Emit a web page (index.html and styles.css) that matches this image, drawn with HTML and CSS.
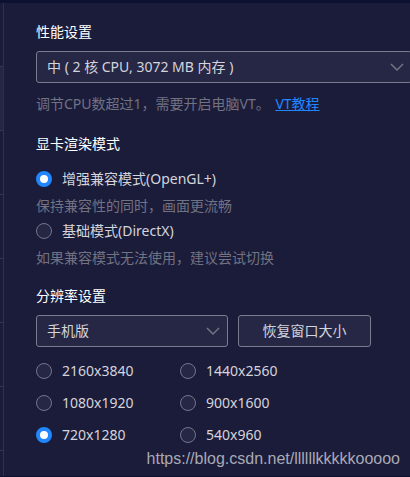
FILE: index.html
```
<!DOCTYPE html>
<html lang="zh-CN">
<head>
<meta charset="utf-8">
<meta name="viewport" content="width=device-width, initial-scale=1">
<title>性能设置</title>
<link rel="stylesheet" href="styles.css">
</head>
<body>
<div class="window">
  <div class="rail"><span></span><span class="active"></span><span></span><span></span><span></span><span></span><span></span><span></span></div>
  <main class="panel">
    <section class="section">
      <h2>性能设置</h2>
      <div class="select wide">
        <select aria-label="性能设置"><option>中 ( 2 核 CPU, 3072 MB 内存 )</option></select>
        <svg viewBox="0 0 14 8" width="14" height="8" aria-hidden="true"><path d="M1 1L7 7L13 1"/></svg>
      </div>
      <p class="note">调节CPU数超过1，需要开启电脑VT。 <a href="#">VT教程</a></p>
    </section>
    <section class="section">
      <h2>显卡渲染模式</h2>
      <div class="modes">
        <label class="radio"><input type="radio" name="mode" checked>增强兼容模式(OpenGL+)</label>
        <p class="hint">保持兼容性的同时，画面更流畅</p>
        <label class="radio"><input type="radio" name="mode">基础模式(DirectX)</label>
        <p class="hint">如果兼容模式无法使用，建议尝试切换</p>
      </div>
    </section>
    <section class="section">
      <h2>分辨率设置</h2>
      <div class="controls">
        <div class="select">
          <select aria-label="分辨率设置"><option>手机版</option></select>
          <svg viewBox="0 0 14 8" width="14" height="8" aria-hidden="true"><path d="M1 1L7 7L13 1"/></svg>
        </div>
        <button type="button">恢复窗口大小</button>
      </div>
      <div class="sizes">
        <label class="radio"><input type="radio" name="size">2160x3840</label>
        <label class="radio"><input type="radio" name="size">1440x2560</label>
        <label class="radio"><input type="radio" name="size">1080x1920</label>
        <label class="radio"><input type="radio" name="size">900x1600</label>
        <label class="radio"><input type="radio" name="size" checked>720x1280</label>
        <label class="radio"><input type="radio" name="size">540x960</label>
      </div>
    </section>
    <footer class="source">https://blog.csdn.net/llllllkkkkkooooo</footer>
  </main>
</div>
</body>
</html>
```
FILE: styles.css
```
* {
  box-sizing: border-box;
}

body {
  margin: 0;
  background: #1b1c3a;
  color: #d4d4dc;
  font: 14px/22px "Noto Sans", "Noto Sans CJK SC", sans-serif;
}

h2,
p {
  margin: 0;
  font-size: 14px;
  font-weight: 400;
}

h2 {
  color: #fff;
}

.window {
  display: flex;
  min-height: 100vh;
  overflow: hidden;
  border-top: 3px solid #0e1030;
  border-bottom: 1px solid #0e1030;
}

.rail {
  display: flex;
  flex-direction: column;
  width: 4px;
  border-right: 1px solid #2f3050;
}

.rail span {
  height: 64px;
  border-bottom: 1px solid #34354f;
}

.rail span:last-child {
  flex: 1;
  height: auto;
  border-bottom: 0;
}

.rail .active {
  background: #252642;
}

.panel {
  flex: 1;
  min-width: 0;
  padding: 18px 0 0 32px;
}

.section {
  margin-bottom: 18px;
}

.select {
  display: grid;
  align-items: center;
  width: 192px;
  margin-top: 8px;
}

.select.wide {
  width: auto;
  margin-right: -2px;
}

.select select,
.select svg {
  grid-area: 1 / 1;
}

.select svg {
  justify-self: end;
  margin-right: 8px;
  fill: none;
  stroke: #777887;
  stroke-width: 1.4;
  pointer-events: none;
}

select,
button {
  height: 32px;
  border: 1px solid #7a7b8c;
  border-radius: 3px;
  background: #262744;
  color: inherit;
  font: inherit;
}

select {
  appearance: none;
  width: 100%;
  padding: 0 28px 0 10px;
}

button {
  width: 133px;
  padding: 0;
}

.note {
  margin-top: 10px;
  color: #717282;
}

.note a {
  margin-left: 2px;
  color: #2187ff;
}

.modes {
  margin: 12px 0 -4px;
}

.hint {
  padding-top: 2px;
  color: #717282;
  line-height: 26px;
}

.radio {
  display: flex;
  align-items: center;
  gap: 10px;
  height: 24px;
}

.radio input {
  appearance: none;
  width: 16px;
  height: 16px;
  margin: 0;
  border: 1px solid #74758a;
  border-radius: 50%;
  background: #262744;
}

.radio input:checked {
  border: 4px solid #2187ff;
  background: #fff;
}

.controls {
  display: flex;
  align-items: flex-end;
  gap: 10px;
}

.sizes {
  display: grid;
  grid-template-columns: 144px auto;
  gap: 8px 0;
  margin-top: 12px;
}

.section:last-of-type {
  margin-bottom: 0;
}

.source {
  padding-right: 10px;
  color: #a9aab5;
  font: 16px/24px "Liberation Sans", sans-serif;
  text-align: right;
}
```
